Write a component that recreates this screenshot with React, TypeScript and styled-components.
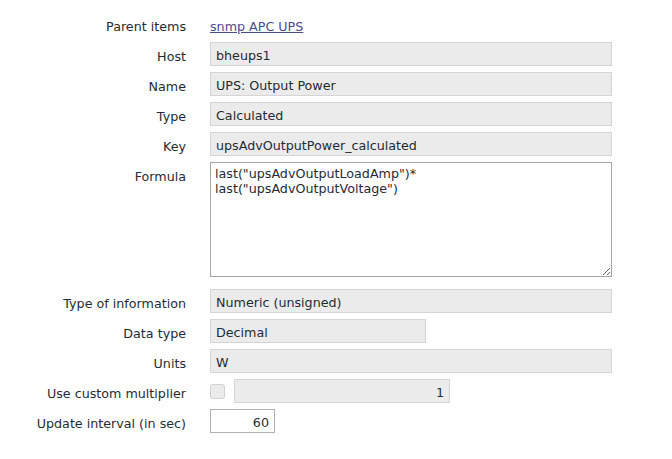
import React from 'react';
import styled, { createGlobalStyle } from 'styled-components';

const GlobalStyle = createGlobalStyle`
  body {
    margin: 0;
    background: #ffffff;
    font-family: 'DejaVu Sans', Verdana, sans-serif;
    font-size: 12.7px;
    color: #1f2c33;
  }
`;

type FieldRow = {
  label: string;
  value: string;
  width?: number;
};

const readonlyRows: FieldRow[] = [
  { label: 'Host', value: 'bheups1' },
  { label: 'Name', value: 'UPS: Output Power' },
  { label: 'Type', value: 'Calculated' },
  { label: 'Key', value: 'upsAdvOutputPower_calculated' },
];

const infoRows: FieldRow[] = [
  { label: 'Type of information', value: 'Numeric (unsigned)' },
  { label: 'Data type', value: 'Decimal', width: 216 },
  { label: 'Units', value: 'W' },
];

export default function App() {
  return (
    <>
      <GlobalStyle />
      <StyledForm>
        <StyledLabel $top={2}>Parent items</StyledLabel>
        <StyledLinkCell>
          <StyledLink href="#">snmp APC UPS</StyledLink>
        </StyledLinkCell>

        {readonlyRows.map((row) => (
          <React.Fragment key={row.label}>
            <StyledLabel>{row.label}</StyledLabel>
            <StyledCell>
              <StyledReadonly $width={row.width}>{row.value}</StyledReadonly>
            </StyledCell>
          </React.Fragment>
        ))}

        <StyledLabel>Formula</StyledLabel>
        <StyledTextareaCell>
          <StyledTextarea
            defaultValue={'last("upsAdvOutputLoadAmp")*\nlast("upsAdvOutputVoltage")'}
          />
        </StyledTextareaCell>

        {infoRows.map((row) => (
          <React.Fragment key={row.label}>
            <StyledLabel>{row.label}</StyledLabel>
            <StyledCell>
              <StyledReadonly $width={row.width}>{row.value}</StyledReadonly>
            </StyledCell>
          </React.Fragment>
        ))}

        <StyledLabel>Use custom multiplier</StyledLabel>
        <StyledCell>
          <StyledMultiplier>
            <StyledCheckbox />
            <StyledReadonly $width={216} $align="right">
              1
            </StyledReadonly>
          </StyledMultiplier>
        </StyledCell>

        <StyledLabel>Update interval (in sec)</StyledLabel>
        <StyledCell>
          <StyledInput defaultValue="60" />
        </StyledCell>
      </StyledForm>
    </>
  );
}

const StyledForm = styled.div`
  display: grid;
  grid-template-columns: 186px 402px;
  column-gap: 24px;
  row-gap: 6px;
  padding-top: 16px;
`;

const StyledLabel = styled.div<{ $top?: number }>`
  text-align: right;
  padding-top: ${(p) => (p.$top !== undefined ? p.$top : 6)}px;
  line-height: 18px;
  white-space: nowrap;
`;

const StyledCell = styled.div`
  display: flex;
  align-items: center;
  height: 24px;
`;

const StyledLinkCell = styled.div`
  box-sizing: border-box;
  height: 20px;
  padding-top: 2px;
`;

const StyledTextareaCell = styled.div`
  height: 115px;
  margin-bottom: 6px;
`;

const StyledLink = styled.a`
  color: #4b4b8f;
  text-decoration: underline;
  line-height: 18px;
`;

const StyledReadonly = styled.div<{ $width?: number; $align?: string }>`
  box-sizing: border-box;
  width: ${(p) => (p.$width ? `${p.$width}px` : '100%')};
  height: 24px;
  padding: 4px 5px 0;
  line-height: 18px;
  text-align: ${(p) => p.$align || 'left'};
  background: #ebebeb;
  border: 1px solid #d5d5d5;
  color: #1f2c33;
  white-space: nowrap;
  overflow: hidden;
`;

const StyledTextarea = styled.textarea`
  display: block;
  box-sizing: border-box;
  width: 100%;
  height: 115px;
  margin: 0;
  padding: 3px 4px;
  font-family: 'DejaVu Sans', Verdana, sans-serif;
  font-size: 12.7px;
  line-height: 15px;
  color: #1f2c33;
  background: #ffffff;
  border: 1px solid #a6a6a6;
  border-radius: 0;
  resize: both;
  outline: none;
`;

const StyledMultiplier = styled.div`
  display: flex;
  align-items: center;
  gap: 9px;
`;

const StyledCheckbox = styled.span`
  box-sizing: border-box;
  width: 15px;
  height: 15px;
  background: #ebebeb;
  border: 1px solid #d0d0d0;
  border-radius: 3px;
`;

const StyledInput = styled.input`
  box-sizing: border-box;
  width: 65px;
  height: 24px;
  margin: 0;
  padding: 2px 5px 0;
  font-family: 'DejaVu Sans', Verdana, sans-serif;
  font-size: 12.7px;
  text-align: right;
  color: #1f2c33;
  background: #ffffff;
  border: 1px solid #b0b0b0;
  border-radius: 0;
  outline: none;
`;
